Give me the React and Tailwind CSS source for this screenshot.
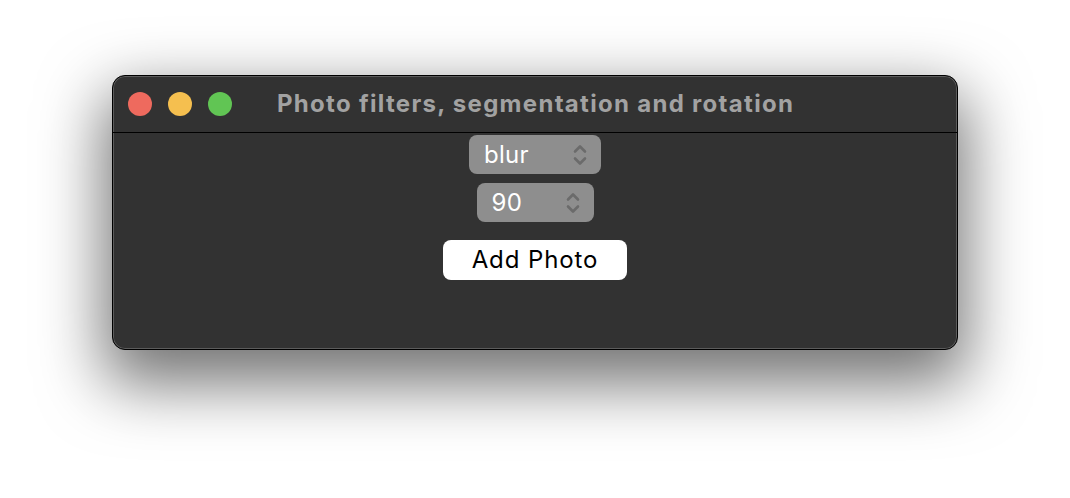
import React, { useState } from "react";

const Chevrons = () => (
  <svg width="14" height="24" viewBox="0 0 14 24" fill="none" stroke="#6b6b6b" strokeWidth="2.6" strokeLinecap="round" strokeLinejoin="round">
    <path d="M2 8.5 L7 3.5 L12 8.5" />
    <path d="M2 15.5 L7 20.5 L12 15.5" />
  </svg>
);

const PopUp = ({ value, width }) => (
  <div className={`flex items-center justify-between h-[39px] rounded-[8px] bg-[#8e8e8e] pl-[15px] pr-[14px] ${width}`}>
    <span className="text-[24px] leading-none text-white tracking-[0.3px]">{value}</span>
    <Chevrons />
  </div>
);

const App = () => {
  const [filter] = useState("blur");
  const [angle] = useState("90");

  return (
    <div className="w-[1070px] h-[498px] bg-white pt-[75px] pl-[112px] font-['Inter','Liberation_Sans',sans-serif]">
      <div className="w-[846px] h-[275px] rounded-[13px] bg-[#323232] border border-black ring-1 ring-inset ring-[#5c5c5c] shadow-[0_26px_64px_8px_rgba(0,0,0,0.55)] overflow-hidden flex flex-col">
        {/* Title bar */}
        <div className="h-[57px] flex items-center border-b border-black shrink-0">
          <div className="flex items-center gap-[16px] pl-[15px]">
            <span className="w-[24px] h-[24px] rounded-full bg-[#ee6a5e]" />
            <span className="w-[24px] h-[24px] rounded-full bg-[#f5bf4f]" />
            <span className="w-[24px] h-[24px] rounded-full bg-[#61c554]" />
          </div>
          <div className="pl-[45px] text-[24px] font-bold text-[#a2a2a2] tracking-[1.3px]">
            Photo filters, segmentation and rotation
          </div>
        </div>

        {/* Content */}
        <div className="flex flex-col items-center pt-[2px]">
          <PopUp value={filter} width="w-[132px]" />
          <div className="mt-[9px]">
            <PopUp value={angle} width="w-[117px]" />
          </div>
          <button className="mt-[18px] w-[184px] h-[40px] rounded-[8px] bg-white text-black text-[24px] leading-none tracking-[0.9px]">
            Add Photo
          </button>
        </div>
      </div>
    </div>
  );
};

export default App;
